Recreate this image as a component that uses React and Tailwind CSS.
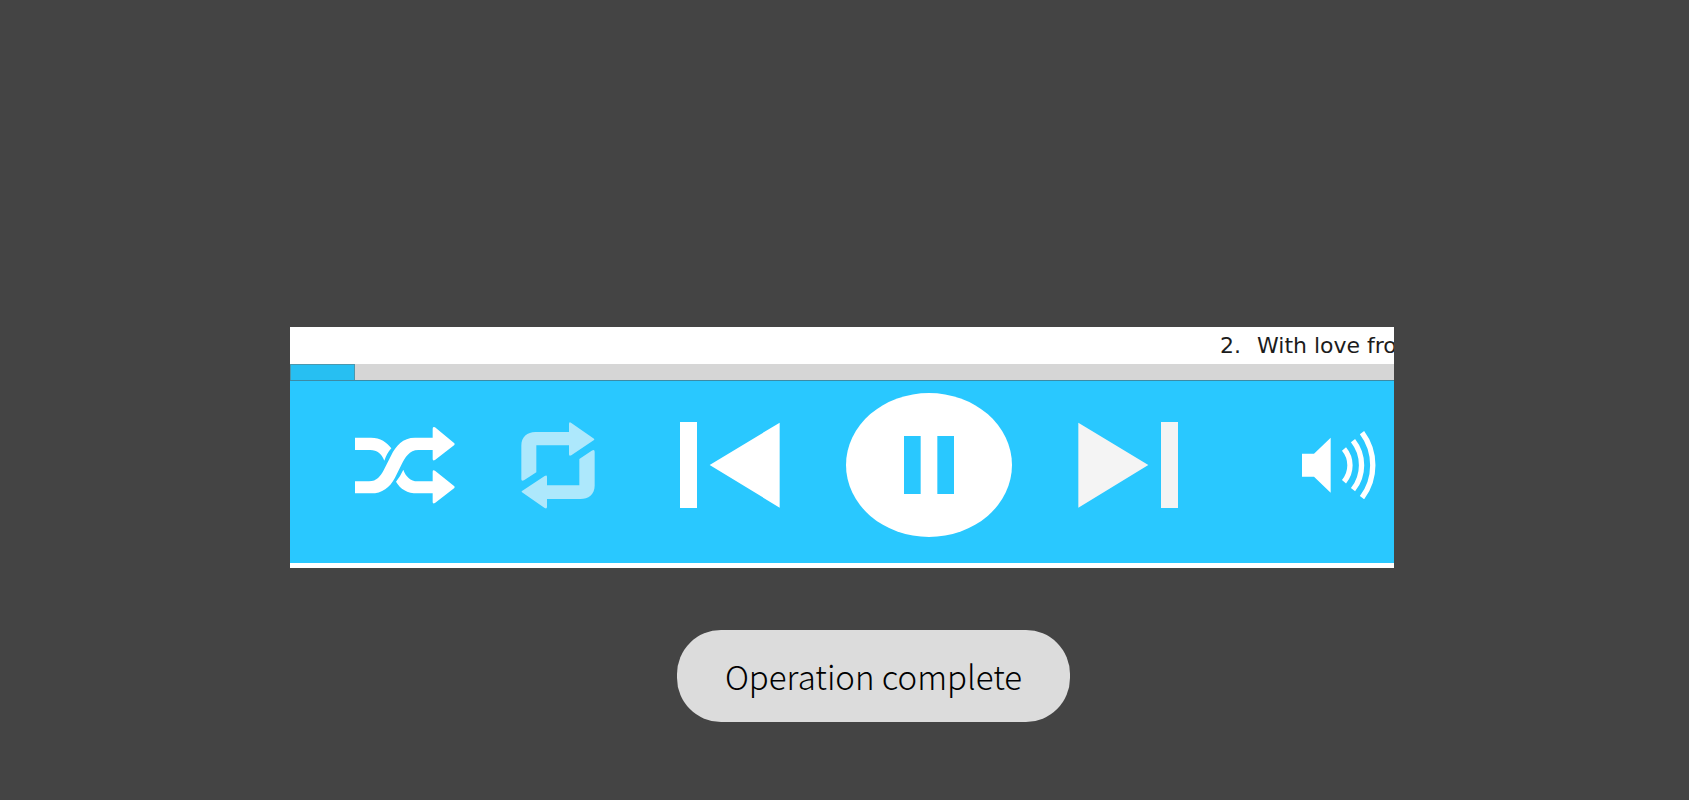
import { useState } from 'react'

function ShuffleIcon() {
  return (
    <svg viewBox="39 45 303 237" width="101" height="79" fill="currentColor" aria-hidden="true">
      <path d="M42 80H90C118 80 138 94 151 112Q138 126 130 149C122 128 108 117 88 117H42Z" />
      <path d="M42 211H84C108 211 118 196 128 178L150 134C165 104 185 80 222 80H275V53Q275 45 282 49L340 97Q342 99 340 102L282 147Q275 151 275 144V117H232C205 117 192 140 182 160L162 200C146 230 124 247 90 247H42Z" />
      <path d="M187 176C194 196 208 211 230 211H275V182Q275 175 282 179L340 226Q342 228 340 231L282 276Q275 280 275 273V247H230C198 247 178 234 165 212Q178 196 187 176Z" />
    </svg>
  )
}

function RepeatIcon() {
  return (
    <svg viewBox="63 30 225 264" width="75" height="88" fill="currentColor" aria-hidden="true">
      <path d="M64 205V104C64 78 82 63 106 63H207V39Q207 31 214 36L282 83Q284 85 282 87L214 133Q207 137 207 130V103H109V184L72 208Q64 212 64 205Z" />
      <path d="M284 122V224C284 250 265 264 241 264H141V287Q141 295 134 291L66 244Q64 242 66 240L134 195Q141 191 141 198V223H238V144L275 119Q284 114 284 122Z" />
    </svg>
  )
}

function PreviousIcon() {
  return (
    <svg viewBox="0 0 300 258" width="100" height="86" fill="currentColor" aria-hidden="true">
      <path d="M0 0H51V258H0ZM299 2V257L89 129Z" />
    </svg>
  )
}

function NextIcon() {
  return (
    <svg viewBox="0 0 300 258" width="100" height="86" fill="currentColor" aria-hidden="true">
      <path d="M249 0H300V258H249ZM1 2V257L211 129Z" />
    </svg>
  )
}

function PauseIcon() {
  return (
    <svg viewBox="0 0 150 174" width="50" height="58" fill="currentColor" aria-hidden="true">
      <path d="M0 0H50V174H0ZM100 0H150V174H100Z" />
    </svg>
  )
}

function PlayIcon() {
  return (
    <svg viewBox="0 0 150 174" width="50" height="58" fill="currentColor" aria-hidden="true">
      <path d="M10 0L150 87L10 174Z" />
    </svg>
  )
}

function VolumeIcon() {
  return (
    <svg viewBox="68 46 222 204" width="74" height="68" aria-hidden="true">
      <path d="M68 114H104L154 66V231L104 183H68Z" fill="currentColor" />
      <g fill="none" stroke="currentColor" strokeWidth="16">
        <path d="M194 100A76 76 0 0 1 194 198" />
        <path d="M221 75A118 118 0 0 1 221 222" />
        <path d="M248 51A163 163 0 0 1 248 246" />
      </g>
    </svg>
  )
}

function Player() {
  const [playing, setPlaying] = useState(true)
  const [repeat, setRepeat] = useState(false)

  return (
    <section className="bg-white pb-[5px] overflow-hidden" aria-label="Player">
      <div className="h-[37px] flex items-center justify-end overflow-hidden">
        <p className="w-[174px] flex gap-4 whitespace-nowrap overflow-hidden font-['DejaVu_Sans',sans-serif] text-[22px] leading-6 text-[#1c1c1c]">
          <span>2.</span>
          <span>With love fro</span>
        </p>
      </div>

      <progress
        className="block w-full h-[17px] appearance-none border-b border-[#3b8ba6] bg-[#d6d6d6] [&::-webkit-progress-bar]:bg-[#d6d6d6] [&::-webkit-progress-value]:bg-[#27bff2] [&::-webkit-progress-value]:border [&::-webkit-progress-value]:border-b-0 [&::-webkit-progress-value]:border-[#4c98ae]"
        value={59}
        max={1000}
        aria-label="Track position"
      />

      <div className="bg-[#29c8ff] pt-3 pb-[26px] pl-16 pr-[18px] flex items-center justify-between text-white">
        <button type="button" aria-label="Shuffle">
          <ShuffleIcon />
        </button>
        <button
          type="button"
          aria-label="Repeat"
          aria-pressed={repeat}
          onClick={() => setRepeat(!repeat)}
          className={repeat ? 'mr-[18px] text-white' : 'mr-[18px] text-[#ade8fc]'}
        >
          <RepeatIcon />
        </button>
        <button type="button" aria-label="Previous">
          <PreviousIcon />
        </button>
        <button
          type="button"
          aria-label={playing ? 'Pause' : 'Play'}
          onClick={() => setPlaying(!playing)}
          className="w-[166px] h-36 rounded-[50%] bg-white text-[#29c8ff] flex items-center justify-center"
        >
          {playing ? <PauseIcon /> : <PlayIcon />}
        </button>
        <button type="button" aria-label="Next" className="text-[#f4f4f4]">
          <NextIcon />
        </button>
        <button type="button" aria-label="Volume" className="ml-[58px]">
          <VolumeIcon />
        </button>
      </div>
    </section>
  )
}

function Toast({ children }) {
  return (
    <div
      role="status"
      className="rounded-[44px] bg-[#dcdcdc] px-12 py-6 font-['Noto_Sans_CJK_SC',sans-serif] font-light text-[33px] leading-[44px] text-black whitespace-nowrap"
    >
      {children}
    </div>
  )
}

export default function App() {
  return (
    <main className="min-h-screen bg-[#444444] pt-[327px]">
      <div className="pl-[290px] pr-[295px]">
        <Player />
      </div>
      <div className="mt-[62px] pl-[58px] flex justify-center">
        <Toast>Operation complete</Toast>
      </div>
    </main>
  )
}
